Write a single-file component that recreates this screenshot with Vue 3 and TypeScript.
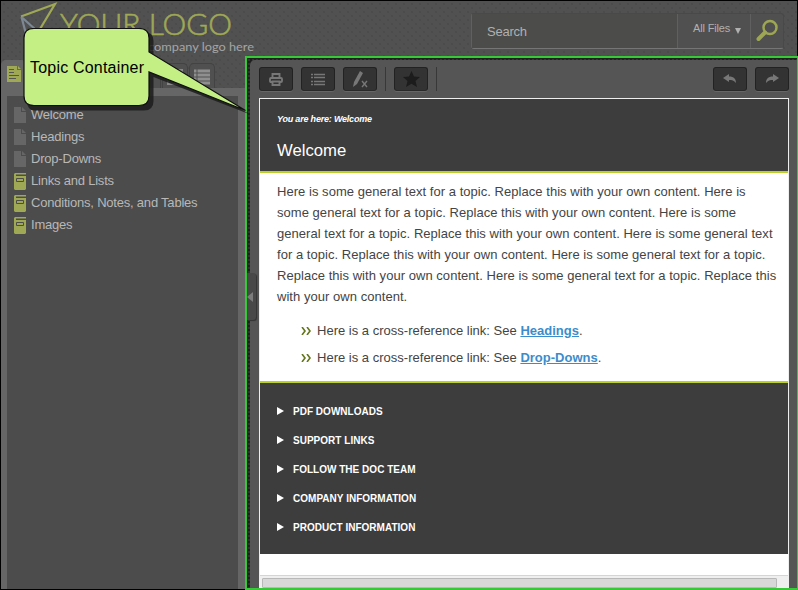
<script setup lang="ts">
interface TocItem { label: string; book: boolean }

const toc: TocItem[] = [
  { label: 'Welcome', book: false },
  { label: 'Headings', book: false },
  { label: 'Drop-Downs', book: false },
  { label: 'Links and Lists', book: true },
  { label: 'Conditions, Notes, and Tables', book: true },
  { label: 'Images', book: true },
]
const lines: string[] = [
  'Here is some general text for a topic. Replace this with your own content. Here is',
  'some general text for a topic. Replace this with your own content. Here is some',
  'general text for a topic. Replace this with your own content. Here is some general text',
  'for a topic. Replace this with your own content. Here is some general text for a topic.',
  'Replace this with your own content. Here is some general text for a topic. Replace this',
  'with your own content.',
]
const links: string[] = ['Headings', 'Drop-Downs']
const sections: string[] = ['PDF DOWNLOADS', 'SUPPORT LINKS', 'FOLLOW THE DOC TEAM', 'COMPANY INFORMATION', 'PRODUCT INFORMATION']
</script>

<template>
  <div class="page">
    <header class="header">
      <svg class="logo" width="270" height="54" viewBox="0 0 270 54">
        <path d="M21 16.500 L55 4 L40 29" fill="none" stroke="#9fa855" stroke-width="2.200" />
        <path d="M21.500 17 L26 34 M21.500 17 L36 30" fill="none" stroke="#7d8894" stroke-width="2.200" />
        <text x="60" y="34.500" class="brand" textLength="172" lengthAdjust="spacingAndGlyphs">YOUR LOGO</text>
        <text x="148" y="50.500" class="tagline" textLength="106" lengthAdjust="spacingAndGlyphs">company logo here</text>
      </svg>
      <div class="search">
        <div class="query">Search</div>
        <div class="filter">All Files<span class="caret"></span></div>
        <div class="go">
          <svg width="24" height="24" viewBox="0 0 24 24" fill="none" stroke="#9da653">
            <circle cx="15" cy="8.500" r="6.500" stroke-width="2.500" />
            <path d="M10 13.500 L3.500 20" stroke-width="4" stroke-linecap="round" />
          </svg>
        </div>
      </div>
    </header>
    <div class="body">
      <aside class="side">
        <nav class="tabs">
          <div class="tab active">
            <svg width="14" height="16" viewBox="0 0 14 16">
              <path d="M0 0H10V4H14V16H0ZM11 0L14 3H11Z" fill="#9fa855" />
              <path d="M2 3.500H7M2 6.500H7M2 9.500H12M2 12.500H9" stroke="#555" />
            </svg>
          </div>
          <div v-for="n in 5" :key="n" class="tab"></div>
          <div class="tab"><svg width="16" height="16" viewBox="0 0 16 16"><path d="M1 1H15V15H1Z" fill="none" stroke="#888" stroke-width="2" /></svg></div>
          <div class="tab">
            <svg width="16" height="17" viewBox="0 0 16 17">
              <path d="M0 2H2.500M0 6H2.500M0 10H2.500M0 14H2.500M3.500 2H16M3.500 6H16M3.500 10H16M3.500 14H16" stroke="#8f8f8f" stroke-width="3" />
            </svg>
          </div>
        </nav>
        <div class="frame">
          <ul class="toc">
            <li v-for="t in toc" :key="t.label">
              <svg v-if="t.book" width="12" height="17" viewBox="0 0 12 17">
                <path d="M1 0H12V1.500H2V3H12V16L11 17H1L0 16V1Z" fill="#9fa855" />
                <path d="M2.500 5.500H9.500V8.500H2.500Z" fill="none" stroke="#4c4c4c" />
              </svg>
              <svg v-else width="12" height="16" viewBox="0 0 12 16">
                <path d="M0 0H7V5H12V16H0ZM8 0L12 4H8Z" fill="#666" />
              </svg>
              <span>{{ t.label }}</span>
            </li>
          </ul>
        </div>
      </aside>
      <main class="container">
        <div class="panel">
          <div class="toolbar">
            <div class="btn"><svg width="14" height="13" viewBox="0 0 14 13"><path d="M3.500 5V1H10.500V5M3.500 9H2Q1 9 1 8V6Q1 5 2 5H12Q13 5 13 6V8Q13 9 12 9H10.500M3.500 8.500V12H10.500V8.500Z" fill="none" stroke="#777" stroke-width="1.900" /></svg></div>
            <div class="btn"><svg width="14" height="13" viewBox="0 0 14 13"><path d="M0 1.500H2M0 4.500H2M0 8.500H2M0 11.500H2M3 1.500H14M3 4.500H14M3 8.500H14M3 11.500H14" stroke="#777" stroke-width="1.300" /></svg></div>
            <div class="btn"><svg width="17" height="17" viewBox="0 0 17 17"><path d="M8 0L11 2L5 13L1 16L2 11Z" fill="#777" /><path d="M10 10L15 16M15 10L10 16" stroke="#777" stroke-width="1.400" /></svg></div>
            <i class="sep"></i>
            <div class="btn"><svg width="17" height="16" viewBox="0 0 17 16"><path d="M8.500 0L11 5.500L17 6L12.500 10L14 16L8.500 12.800L3 16L4.500 10L0 6L6 5.500Z" fill="#1c1c1c" /></svg></div>
            <i class="sep"></i>
            <div class="spacer"></div>
            <div class="btn"><svg width="14" height="10" viewBox="0 0 14 10"><path d="M0 4L6 0V2.500C11 2.500 13 5 13 9C11 6.500 9 6 6 6V8Z" fill="#777" /></svg></div>
            <div class="btn"><svg width="14" height="10" viewBox="0 0 14 10"><path d="M14 4L8 0V2.500C3 2.500 1 5 1 9C3 6.500 5 6 8 6V8Z" fill="#777" /></svg></div>
          </div>
          <article class="topic">
            <div class="title">
              <div class="crumbs">You are here: Welcome</div>
              <h1>Welcome</h1>
            </div>
            <div class="content">
              <p><span v-for="(l, i) in lines" :key="i" class="line">{{ l }}</span></p>
              <div v-for="l in links" :key="l" class="xref">
                <svg width="10" height="8" viewBox="0 0 10 8"><path d="M1 0L4 4L1 8M6 0L9 4L6 8" fill="none" stroke="#63761c" stroke-width="1.600" /></svg>
                <span>Here is a cross-reference link: See <a>{{ l }}</a>.</span>
              </div>
            </div>
            <div class="drops">
              <div v-for="s in sections" :key="s" class="drop"><i class="tri"></i>{{ s }}</div>
            </div>
            <div class="blank"></div>
            <div class="scroll"><div class="thumb"></div></div>
          </article>
        </div>
        <div class="handle"><i></i></div>
      </main>
    </div>
    <svg class="callout" width="240" height="100" viewBox="0 0 240 100">
      <path d="M12 4H121Q130.500 4 130.500 13V27L226 86L130.500 49V73Q130.500 82.500 121 82.500H12Q4 82.500 4 73V13Q4 4 12 4Z" fill="#1c1c1c" opacity=".85" />
      <path d="M11 .5H116Q126 .5 126 10V24L222.500 82.500L126 44V68Q126 77.500 116 77.500H11Q1 77.500 1 68V10Q1 .5 11 .5Z" fill="#c3ef85" stroke="#101010" stroke-width="1.200" />
      <text x="7" y="45" textLength="114">Topic Container</text>
    </svg>
  </div>
</template>

<style>
body { margin: 0; overflow: hidden; }
</style>
<style scoped>
* { box-sizing: border-box; }
.page { position: relative; width: 798px; height: 590px; display: flex; flex-direction: column; overflow: hidden; font-family: "Liberation Sans", Arial, sans-serif; background-color: #515151; background-image: radial-gradient(circle, #494949 0.6px, transparent 1px), radial-gradient(circle, #494949 0.6px, transparent 1px); background-size: 8px 8px; background-position: 0 0, 4px 4px; }
.header { height: 56px; flex: none; border: solid #000; border-width: 1px 1px 0; display: flex; justify-content: space-between; }
.logo { margin-left: -1px; margin-top: -1px; }
.brand { font: 300 29px Lato, sans-serif; fill: #9fa855; stroke: #9fa855; stroke-width: .6; }
.tagline { font: 11.500px Lato, sans-serif; fill: #a5a5a5; }
.search { display: flex; width: 313px; height: 36px; margin: 12px 13px 0 0; border: 1px solid #494949; border-left-color: #606060; border-bottom-color: #757575; border-radius: 3px; background: #505050; color: #b0b0b0; }
.query { width: 205px; background: #4c4c4a; padding-left: 15px; font-size: 13px; line-height: 36px; letter-spacing: -.25px; }
.filter { width: 73px; border-left: 1px solid #606060; padding-left: 15px; font-size: 11px; line-height: 28px; letter-spacing: -.15px; display: flex; }
.caret { border: 3px solid transparent; border-top: 6px solid #b0b0b0; border-bottom: 0; height: 6px; margin: 14px 0 0 5px; }
.go { border-left: 1px solid #606060; padding: 5px 0 0 4px; }
.body { flex: 1; display: flex; min-height: 0; }
.side { width: 245px; flex: none; padding-top: 4px; border: solid #000; border-width: 0 0 1px 1px; display: flex; flex-direction: column; }
.tabs { display: flex; height: 28px; gap: 1px; }
.tab { width: 26px; flex: none; border: 1px solid #434343; border-bottom: 0; border-radius: 5px 5px 0 0; display: flex; padding: 5px 0 0 4px; margin-top: 3px; background: #505050; }
.tab.active { width: 25px; background: #666; border-color: #666; padding: 5px 0 0 5px; margin-top: 0; }
.frame { flex: 1; background: #666; padding: 8px 7px 0 6px; display: flex; }
.toc { flex: 1; list-style: none; margin: 0; padding: 8px 0 0 7px; background: #4c4c4c; color: #b8b8b8; font-size: 13px; letter-spacing: -.21px; }
.toc li { height: 22px; line-height: 22px; display: flex; align-items: center; gap: 5px; }
.container { position: relative; flex: 1; min-width: 0; border: 2px solid #37c837; border-right-width: 1px; padding: 2px 0 0 3px; background-color: #1f1f1f; background-image: radial-gradient(circle, #333 0.8px, transparent 1px); background-size: 4px 4px; display: flex; }
.panel { flex: 1; min-width: 0; background: #555; border-radius: 5px 0 0; padding: 7px 8px 0 9px; display: flex; flex-direction: column; }
.toolbar { display: flex; height: 31px; gap: 8px; flex: none; }
.btn { width: 34px; height: 24px; border: 1px solid #222; border-bottom-color: #292929; border-radius: 3px; background: #333; box-shadow: 0 1px #666; display: flex; align-items: center; justify-content: center; }
.sep { width: 1px; height: 24px; background: #383838; }
.spacer { flex: 1; }
.topic { flex: 1; border: 1px solid #eee; border-bottom: 0; background: #fff; display: flex; flex-direction: column; }
.title { height: 74px; flex: none; background: #3d3d3d; border-bottom: 2px solid #bad12c; color: #fff; padding: 14px 17px; }
.crumbs { font: italic bold 9px/12px "Liberation Sans", Arial, sans-serif; letter-spacing: -.2px; }
h1 { font-weight: 400; font-size: 16.700px; line-height: 20px; margin: 16px 0 0; }
.content { height: 208px; flex: none; padding: 8px 0 0 17px; color: #444; font-size: 13px; }
p { margin: 0 0 10px; }
.line { display: block; line-height: 21px; letter-spacing: .04px; white-space: nowrap; }
.xref { height: 27px; line-height: 27px; display: flex; align-items: center; gap: 6px; padding-left: 24px; letter-spacing: .01px; }
a { color: #3c8ccb; font-weight: bold; text-decoration: underline; }
.drops { height: 173px; flex: none; border-top: 2px solid #bad12c; background: #3d3d3d; color: #fff; padding: 14px 0 0 17px; }
.drop { height: 29px; line-height: 29px; font-weight: bold; font-size: 10px; letter-spacing: .02px; display: flex; align-items: center; }
.tri { border: 4px solid transparent; border-left: 7px solid #fff; border-right: 0; margin: -1px 9px 0 0; }
.blank { height: 21px; flex: none; }
.scroll { flex: 1; border-top: 1px solid #d5d5d5; background: #efefef; padding: 2px 11px 0 2px; }
.thumb { height: 10px; background: #d8d8d8; border: 1px solid #b8b8b8; border-radius: 1px; }
.handle { position: absolute; left: 0; top: 215px; width: 9px; height: 47px; background: #484848; border-radius: 0 3px 3px 0; box-shadow: 1px 1px 1px #333; display: flex; align-items: center; }
.handle i { border: 5px solid transparent; border-right: 6px solid #7c7c7c; border-left: 0; }
.callout { position: absolute; left: 23px; top: 28px; }
.callout text { font-size: 16px; fill: #000; }
</style>
